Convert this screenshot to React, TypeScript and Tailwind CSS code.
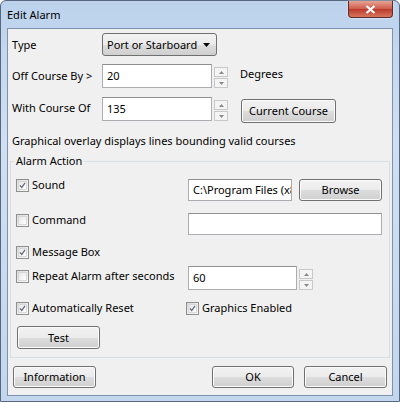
import React from "react";

const font = { fontFamily: '"Noto Sans", "Open Sans", sans-serif' };

function Btn({ children, className = "" }: { children: React.ReactNode; className?: string }) {
  return (
    <div
      className={
        "flex shrink-0 items-center justify-center rounded-[3px] border border-[#707070] bg-[linear-gradient(to_bottom,#f2f2f2_0%,#ebebeb_50%,#dddddd_51%,#cfcfcf_100%)] text-[11px] text-black shadow-[inset_0_0_0_1px_#fcfcfc] " +
        className
      }
    >
      {children}
    </div>
  );
}

function Input({ value, className = "" }: { value?: string; className?: string }) {
  return (
    <div
      className={
        "flex shrink-0 items-center overflow-hidden whitespace-nowrap border border-[#abadb3] border-t-[#8e8f8f] bg-white pl-[4px] text-[11px] text-black " +
        className
      }
    >
      {value}
    </div>
  );
}

function Spin() {
  return (
    <div className="ml-[2px] mt-[3px] flex shrink-0 flex-col gap-[1px]">
      <div className="flex h-[10px] w-[14px] items-center justify-center border border-[#c8c8c8] bg-[#f4f4f4]">
        <svg width="5" height="3" viewBox="0 0 5 3"><path d="M0 3 L2.5 0 L5 3 Z" fill="#8a8a8a" /></svg>
      </div>
      <div className="flex h-[10px] w-[14px] items-center justify-center border border-[#c8c8c8] bg-[#f4f4f4]">
        <svg width="5" height="3" viewBox="0 0 5 3"><path d="M0 0 L2.5 3 L5 0 Z" fill="#8a8a8a" /></svg>
      </div>
    </div>
  );
}

function Check({ checked, label }: { checked: boolean; label: string }) {
  return (
    <div className="flex h-[16px] items-center whitespace-nowrap">
      <div className="flex h-[13px] w-[13px] shrink-0 items-center justify-center border border-[#8e8f8f] bg-[linear-gradient(135deg,#dcdcdc,#fbfbfb)] p-[1px]">
        <div className="flex h-full w-full items-center justify-center border border-[#d8d8d8] bg-[linear-gradient(135deg,#e6e6e6,#ffffff)]">
          {checked && (
            <svg width="9" height="9" viewBox="0 0 9 9">
              <path d="M1.2 4.2 L3.5 7 L7.8 1.2" stroke="#5f6878" strokeWidth="1.5" fill="none" />
            </svg>
          )}
        </div>
      </div>
      <span className="ml-[3px] text-[11px] text-black">{label}</span>
    </div>
  );
}

export default function App() {
  return (
    <div style={font} className="h-[402px] w-[400px] bg-white">
      <div className="flex h-[402px] w-[400px] flex-col rounded-t-[6px] border border-[#56677f] bg-[linear-gradient(to_bottom,#bcd2ec,#d0e0f2_35%,#c2d6ed)]">
        {/* title bar */}
        <div className="flex h-[27px] shrink-0 items-start justify-between">
          <span className="ml-[6px] mt-[6px] text-[11px] leading-[16px] text-black">Edit Alarm</span>
          <div className="mr-[6px] flex h-[17px] w-[45px] items-center justify-center rounded-b-[4px] border border-t-0 border-[#5c2b2b] bg-[linear-gradient(to_bottom,#e6a493,#d05a4a_50%,#b83a2a_51%,#d8765e)] shadow-[0_0_2px_#ffffff]">
            <svg width="11" height="9" viewBox="0 0 11 9">
              <path d="M1.5 1 L9.5 8 M9.5 1 L1.5 8" stroke="#ffffff" strokeWidth="2.2" />
            </svg>
          </div>
        </div>
        {/* client */}
        <div className="mx-[6px] mb-[5px] flex flex-1 flex-col border border-[#8092ab] bg-[#f0f0f0] text-[11px] leading-[16px] text-black">
          <div className="mt-[4px] flex h-[23px] items-center">
            <span className="ml-[4px] w-[90px]">Type</span>
            <div className="flex h-[23px] w-[115px] items-center justify-between rounded-[3px] border border-[#707070] bg-[linear-gradient(to_bottom,#f2f2f2_0%,#ebebeb_50%,#dddddd_51%,#cfcfcf_100%)] pl-[4px] pr-[6px]">
              <span>Port or Starboard</span>
              <svg width="7" height="4" viewBox="0 0 7 4"><path d="M0 0 L3.5 4 L7 0 Z" fill="#000" /></svg>
            </div>
          </div>
          <div className="mt-[8px] flex h-[24px] items-start">
            <span className="ml-[4px] mt-[4px] w-[90px]">Off Course By &gt;</span>
            <Input value="20" className="h-[24px] w-[110px]" />
            <Spin />
            <span className="ml-[12px] mt-[2px]">Degrees</span>
          </div>
          <div className="mt-[9px] flex h-[26px] items-start">
            <span className="ml-[4px] mt-[3px] w-[90px]">With Course Of</span>
            <Input value="135" className="h-[24px] w-[110px]" />
            <Spin />
            <Btn className="ml-[13px] mt-[2px] h-[24px] w-[95px]">Current Course</Btn>
          </div>
          <div className="ml-[4px] mt-[10px] h-[16px] whitespace-nowrap">
            Graphical overlay displays lines bounding valid courses
          </div>
          {/* group */}
          <div className="relative mx-[2px] mt-[12px] flex h-[197px] flex-col border border-[#d5dfe5] pl-[5px]">
            <span className="absolute -top-[9px] left-[3px] bg-[#f0f0f0] px-[2px] leading-[16px]">Alarm Action</span>
            <div className="mt-[17px] flex h-[22px] items-start">
              <div className="-mt-[2px] w-[172px]"><Check checked label="Sound" /></div>
              <Input value="C:\Program Files (x86)" className="h-[22px] w-[104px]" />
              <Btn className="ml-[7px] h-[22px] w-[83px]">Browse</Btn>
            </div>
            <div className="mt-[12px] flex h-[22px] items-start">
              <div className="-mt-[1px] w-[172px]"><Check checked={false} label="Command" /></div>
              <Input className="h-[22px] w-[194px]" />
            </div>
            <div className="mt-[9px] flex h-[16px] items-center">
              <Check checked label="Message Box" />
            </div>
            <div className="mt-[6px] flex h-[24px] items-start">
              <div className="mt-[2px] w-[172px]"><Check checked={false} label="Repeat Alarm after seconds" /></div>
              <Input value="60" className="h-[24px] w-[109px]" />
              <Spin />
            </div>
            <div className="mt-[10px] flex h-[16px] items-center">
              <div className="w-[170px]"><Check checked label="Automatically Reset" /></div>
              <Check checked label="Graphics Enabled" />
            </div>
            <Btn className="ml-[1px] mt-[10px] h-[23px] w-[83px]">Test</Btn>
          </div>
          <div className="mt-[8px] flex items-center pl-[5px] pr-[5px]">
            <Btn className="h-[22px] w-[83px]">Information</Btn>
            <div className="flex-1" />
            <Btn className="h-[22px] w-[82px]">OK</Btn>
            <Btn className="ml-[10px] h-[22px] w-[83px]">Cancel</Btn>
          </div>
        </div>
      </div>
    </div>
  );
}
